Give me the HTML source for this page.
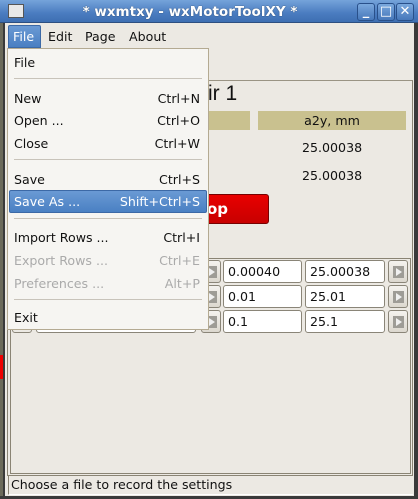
<!DOCTYPE html>
<html><head><style>
*{box-sizing:border-box;margin:0;padding:0}
body{width:418px;height:499px;overflow:hidden;background:#ece9e3;font-family:"DejaVu Sans","Liberation Sans",sans-serif;font-size:12.6px;color:#111;position:relative}
.a{position:absolute}
.title{left:0;top:0;width:418px;height:23px;background:linear-gradient(#75a3da,#4a7cc0 60%,#3e6fb2);border-bottom:1px solid #2d4f80}
.tb{top:3px;width:18px;height:18px;border:1px solid #29508a;border-radius:3px;background:linear-gradient(#7aa8dd,#4677ba);color:#fff;font-weight:bold;text-align:center;line-height:16px;font-size:13px}
.mi{top:29px}
.menu{left:7px;top:48px;width:202px;height:282px;background:#f6f5f2;border:1px solid #b4aa92}
.it{left:6px}
.sc{right:8px;text-align:right}
.sep{left:6px;width:188px;height:1px;background:#c8c3ba}
.dis{color:#aaa}
.in{height:23px;background:#fff;border:1px solid #8a8578;border-radius:3px;padding-left:4px;line-height:22px}
.btn{width:20px;height:23px;border:1px solid #8a8578;border-radius:3px;background:linear-gradient(#f4f2ee,#dcd8cf)}
.btn:after{content:"";position:absolute;left:4px;top:5px;width:11px;height:12px;background:#9e9c96}
.btn:before{content:"";position:absolute;left:7px;top:7px;border-left:6px solid #f0f0f0;border-top:4px solid transparent;border-bottom:4px solid transparent;z-index:2}
</style></head><body>
<div class="a" style="left:0;top:23px;width:3px;height:476px;background:#6b6a5a"></div>
<div class="a" style="left:0;top:355px;width:3px;height:24px;background:#e00"></div>
<div class="a" style="left:3px;top:23px;width:2px;height:476px;background:#3a3a3a"></div>
<div class="a" style="left:414px;top:23px;width:4px;height:476px;background:#3a3a3a"></div>
<div class="a" style="left:0;top:496px;width:418px;height:3px;background:#3a3a3a"></div>
<div class="a title"></div>
<div class="a" style="left:8px;top:4px;width:16px;height:14px;background:#e8e8e8;border:1px solid #555"></div>
<div class="a" style="left:40px;top:4px;width:300px;text-align:center;color:#fff;font-weight:bold;font-size:13.5px;text-shadow:0 0 1px #234">* wxmtxy - wxMotorToolXY *</div>
<div class="a tb" style="left:357px">_</div>
<div class="a tb" style="left:377px">□</div>
<div class="a tb" style="left:396px">✕</div>
<div class="a" style="left:5px;top:24px;width:409px;height:24px;background:#ece9e3"></div>
<div class="a" style="left:8px;top:25px;width:33px;height:23px;background:linear-gradient(#6a9ad4,#4a7fc2);border:1px solid #3c69a6;border-radius:2px 2px 0 0"></div>
<div class="a mi" style="left:13px;color:#fff">File</div>
<div class="a mi" style="left:48px">Edit</div>
<div class="a mi" style="left:85px">Page</div>
<div class="a mi" style="left:129px">About</div>
<!-- content -->
<div class="a" style="left:7px;top:80px;width:406px;height:396px;border:1px solid #8a8474;border-top-color:#9a9484"></div>
<div class="a" style="left:208px;top:82px;font-size:21px;font-family:'Liberation Sans',sans-serif">ir 1</div>
<div class="a" style="left:180px;top:111px;width:70px;height:19px;background:#c9c18f"></div>
<div class="a" style="left:258px;top:111px;width:148px;height:19px;background:#c9c18f;text-align:center;line-height:19px">a2y, mm</div>
<div class="a" style="left:302px;top:140px">25.00038</div>
<div class="a" style="left:302px;top:168px">25.00038</div>
<div class="a" style="left:190px;top:194px;width:79px;height:30px;background:linear-gradient(#e80000,#c80000);border:1px solid #700;border-radius:3px;color:#fff;font-weight:bold;font-size:15px;padding-left:16px;line-height:28px">op</div>
<div class="a" style="left:10px;top:258px;width:401px;height:216px;border:1px solid #8a8474"></div>
<div class="a" style="left:36px;top:310px;width:160px;height:23px;background:#fff;border:1px solid #8a8578;border-radius:3px"></div>
<div class="a" style="left:12px;top:310px;width:20px;height:23px;border:1px solid #8a8578;border-radius:3px"></div>
<div class="a btn" style="left:201px;top:260px"></div>
<div class="a btn" style="left:201px;top:285px"></div>
<div class="a btn" style="left:201px;top:310px"></div>
<div class="a in" style="left:223px;top:260px;width:79px">0.00040</div>
<div class="a in" style="left:305px;top:260px;width:80px">25.00038</div>
<div class="a btn" style="left:388px;top:260px"></div>
<div class="a in" style="left:223px;top:285px;width:79px">0.01</div>
<div class="a in" style="left:305px;top:285px;width:80px">25.01</div>
<div class="a btn" style="left:388px;top:285px"></div>
<div class="a in" style="left:223px;top:310px;width:79px">0.1</div>
<div class="a in" style="left:305px;top:310px;width:80px">25.1</div>
<div class="a btn" style="left:388px;top:310px"></div>
<div class="a" style="left:8px;top:476px;width:405px;height:19px;border-left:1px solid #8a8474;border-bottom:1px solid #fff"></div>
<div class="a" style="left:11px;top:477px">Choose a file to record the settings</div>
<!-- menu -->
<div class="a menu">
<div class="a it" style="top:6px">File</div>
<div class="a sep" style="top:29px"></div>
<div class="a it" style="top:42px">New</div><div class="a sc" style="top:42px">Ctrl+N</div>
<div class="a it" style="top:64px">Open ...</div><div class="a sc" style="top:64px">Ctrl+O</div>
<div class="a it" style="top:87px">Close</div><div class="a sc" style="top:87px">Ctrl+W</div>
<div class="a sep" style="top:110px"></div>
<div class="a it" style="top:123px">Save</div><div class="a sc" style="top:123px">Ctrl+S</div>
<div class="a" style="left:1px;top:141px;width:198px;height:23px;background:linear-gradient(#6a9ad4,#4a80c3);border:1px solid #3c69a6;border-radius:2px"></div>
<div class="a it" style="top:145px;color:#fff">Save As ...</div><div class="a sc" style="top:145px;color:#fff">Shift+Ctrl+S</div>
<div class="a sep" style="top:169px"></div>
<div class="a it" style="top:181px">Import Rows ...</div><div class="a sc" style="top:181px">Ctrl+I</div>
<div class="a it dis" style="top:204px">Export Rows ...</div><div class="a sc dis" style="top:204px">Ctrl+E</div>
<div class="a it dis" style="top:227px">Preferences ...</div><div class="a sc dis" style="top:227px">Alt+P</div>
<div class="a sep" style="top:250px"></div>
<div class="a it" style="top:261px">Exit</div>
</div>
</body></html>
